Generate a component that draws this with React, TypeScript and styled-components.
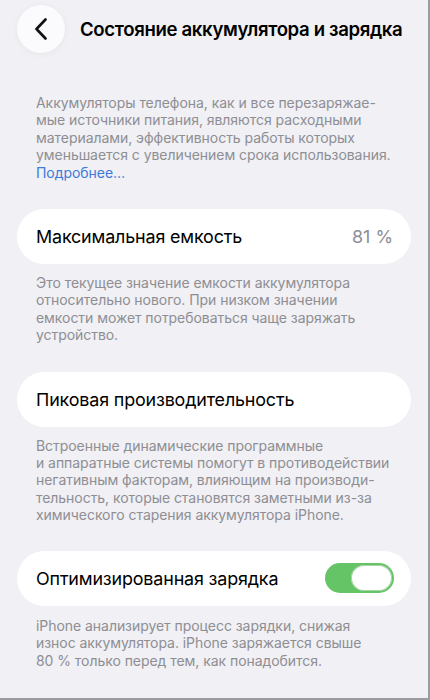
import React, {useState} from 'react';
import styled, {createGlobalStyle} from 'styled-components';

const GlobalStyle = createGlobalStyle`
html, body {
  margin: 0;
  padding: 0;
  background: #f0f0f5;
}
body {
  font-family: Inter, "Noto Sans", "Liberation Sans", sans-serif;
  -webkit-font-smoothing: antialiased;
}
`

const Frame = styled.div`
width: 430px;
height: 700px;
box-sizing: border-box;
background: #f0f0f5;
border-right: 2px solid #9c9ca0;
border-bottom: 2px solid #9c9ca0;
padding: 5px 17px 0 17px;
overflow: hidden;
`
const Header = styled.div`
display: flex;
align-items: center;
gap: 15px;
height: 48px;
`
const BackButton = styled.button`
width: 48px;
height: 48px;
border-radius: 50%;
border: none;
background: #fbfbfd;
box-shadow: 0 1px 6px rgba(0, 0, 0, 0.05);
display: flex;
align-items: center;
justify-content: center;
padding: 0;
flex-shrink: 0;
`
const Title = styled.h1`
margin: 0;
font-size: 18.6px;
font-weight: 600;
color: #000;
letter-spacing: -0.35px;
white-space: nowrap;
`
const Note = styled.p<{$top: number}>`
margin: ${p => p.$top}px 0 0 0;
padding: 0 19px;
font-size: 14px;
line-height: 17.4px;
color: #8e8e93;
letter-spacing: -0.05px;
white-space: nowrap;
`
const Link = styled.a`
color: #3d7ad9;
text-decoration: none;
`
const Card = styled.div<{$top: number}>`
margin-top: ${p => p.$top}px;
height: 55px;
border-radius: 28px;
background: #fff;
display: flex;
align-items: center;
justify-content: space-between;
padding: 0 18px 0 19px;
`
const Label = styled.span`
font-size: 17.9px;
color: #000;
letter-spacing: -0.15px;
`
const Value = styled.span`
font-size: 17.9px;
color: #8e8e93;
`
const Toggle = styled.button<{$on: boolean}>`
width: 69px;
height: 30px;
border-radius: 15px;
border: none;
padding: 2px;
background: ${p => p.$on ? '#65c466' : '#e5e5ea'};
display: flex;
justify-content: ${p => p.$on ? 'flex-end' : 'flex-start'};
align-items: center;
box-sizing: border-box;
margin-right: -1px;
`
const Knob = styled.span`
width: 41px;
height: 26px;
border-radius: 13px;
background: #fff;
box-shadow: inset 0 0 0 1px rgba(80, 170, 80, 0.5);
`

export default function App() {
    const [optimized, setOptimized] = useState(true)

    return (
        <Frame>
            <GlobalStyle/>
            <Header>
                <BackButton aria-label="Назад">
                    <svg width="14" height="22" viewBox="0 0 14 22">
                        <path d="M11.5 1.5 L2.5 11 L11.5 20.5" fill="none" stroke="#111" strokeWidth="2.6"
                              strokeLinecap="round" strokeLinejoin="round"/>
                    </svg>
                </BackButton>
                <Title>Состояние аккумулятора и зарядка</Title>
            </Header>

            <Note $top={41}>
                Аккумуляторы телефона, как и все перезаряжае-<br/>
                мые источники питания, являются расходными<br/>
                материалами, эффективность работы которых<br/>
                уменьшается с увеличением срока использования.<br/>
                <Link href="#">Подробнее…</Link>
            </Note>

            <Card $top={28}>
                <Label>Максимальная емкость</Label>
                <Value>81 %</Value>
            </Card>
            <Note $top={10}>
                Это текущее значение емкости аккумулятора<br/>
                относительно нового. При низком значении<br/>
                емкости может потребоваться чаще заряжать<br/>
                устройство.
            </Note>

            <Card $top={28}>
                <Label>Пиковая производительность</Label>
            </Card>
            <Note $top={10}>
                Встроенные динамические программные<br/>
                и аппаратные системы помогут в противодействии<br/>
                негативным факторам, влияющим на производи-<br/>
                тельность, которые становятся заметными из-за<br/>
                химического старения аккумулятора iPhone.
            </Note>

            <Card $top={27}>
                <Label>Оптимизированная зарядка</Label>
                <Toggle $on={optimized} onClick={() => setOptimized(!optimized)} aria-label="Оптимизированная зарядка">
                    <Knob/>
                </Toggle>
            </Card>
            <Note $top={11}>
                iPhone анализирует процесс зарядки, снижая<br/>
                износ аккумулятора. iPhone заряжается свыше<br/>
                80 % только перед тем, как понадобится.
            </Note>
        </Frame>
    );
}
